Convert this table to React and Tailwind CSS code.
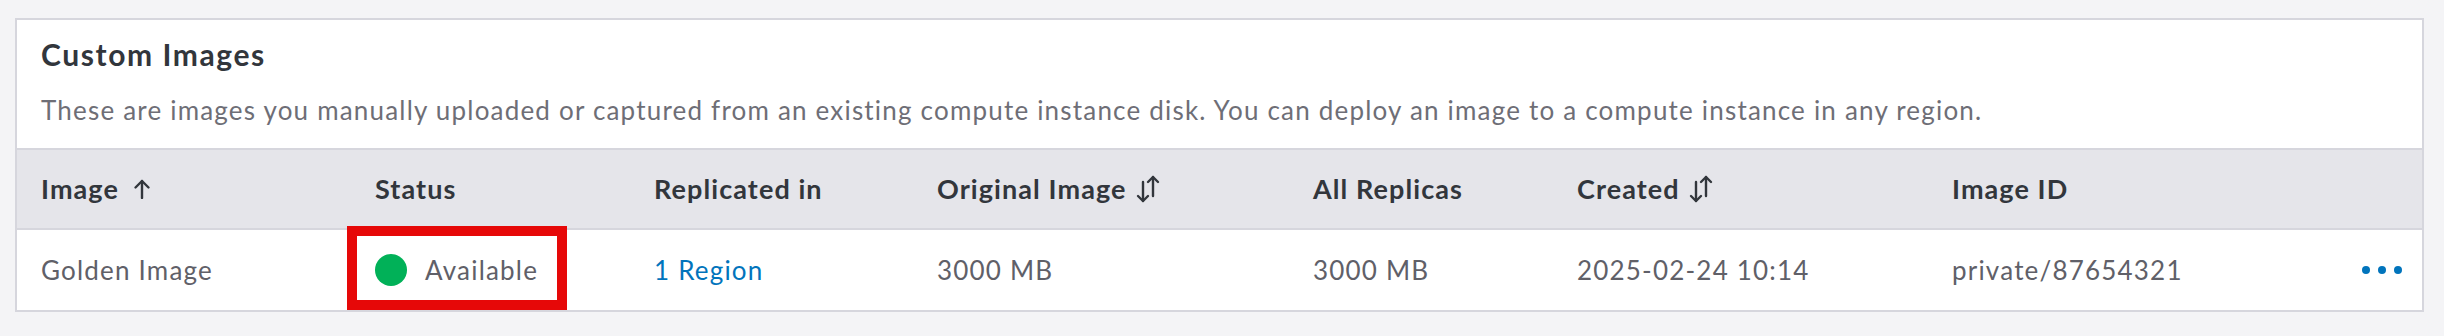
import React from 'react'

// ─── Icons ───────────────────────────────────────────────────────────────────

function ArrowUp() {
  return (
    <svg width="18" height="20" viewBox="0 0 18 20" fill="none" stroke="#32363c" strokeWidth="2.4" strokeLinecap="round" strokeLinejoin="round">
      <path d="M9 19V2" />
      <path d="M2.5 8.5L9 2l6.5 6.5" />
    </svg>
  )
}

function SortBoth() {
  return (
    <svg width="26" height="28" viewBox="0 0 26 28" fill="none" stroke="#32363c" strokeWidth="2.4" strokeLinecap="round" strokeLinejoin="round">
      <path d="M8 7v19" />
      <path d="M3 21l5 5 5-5" />
      <path d="M18 21V2" />
      <path d="M13 7l5-5 5 5" />
    </svg>
  )
}

// ─── Data ────────────────────────────────────────────────────────────────────

const COLUMNS = [
  { label: 'Image', sort: 'up' },
  { label: 'Status' },
  { label: 'Replicated in' },
  { label: 'Original Image', sort: 'both' },
  { label: 'All Replicas' },
  { label: 'Created', sort: 'both' },
  { label: 'Image ID' },
  { label: '' },
]

const GRID = 'grid grid-cols-[334px_279px_283px_376px_264px_375px_1fr_80px]'

// ─── Page ────────────────────────────────────────────────────────────────────

export default function App() {
  return (
    <div className="min-h-[336px] bg-[#f4f4f6] pt-[18px] pl-[15px] pr-[20px] pb-[24px] font-['Lato',sans-serif]">
      <div className="bg-white border-2 border-[#d6d6dd]">

        {/* ── Header ─────────────────────────────────────────────────── */}
        <div className="px-[24px] pt-[16px] pb-[22px]">
          <h2 className="text-[30px] leading-[36px] font-bold text-[#32363c] tracking-[0.053em]">Custom Images</h2>
          <p className="mt-[23px] text-[26px] leading-[31px] text-[#6e6e76] tracking-[0.046em]">
            These are images you manually uploaded or captured from an existing compute instance disk. You can deploy an image to a compute instance in any region.
          </p>
        </div>

        {/* ── Table head ─────────────────────────────────────────────── */}
        <div className={`${GRID} h-[82px] items-center bg-[#e5e5ea] border-y-2 border-[#d6d6dd]`}>
          {COLUMNS.map((c, i) => (
            <div
              key={i}
              className={`pl-[24px] flex items-center text-[27px] font-bold text-[#32363c] tracking-[0.04em] ${c.sort === 'both' ? 'gap-[8px]' : 'gap-[14px]'}`}
            >
              {c.label}
              {c.sort === 'up' && <ArrowUp />}
              {c.sort === 'both' && <SortBoth />}
            </div>
          ))}
        </div>

        {/* ── Row ────────────────────────────────────────────────────── */}
        <div className={`${GRID} h-[80px] items-center text-[26px] text-[#606068] tracking-[0.046em]`}>
          <div className="pl-[24px]">Golden Image</div>
          <div className="pl-[24px] relative self-stretch flex items-center gap-[18px]">
            <span className="w-[32px] h-[32px] rounded-full bg-[#01b158]" />
            Available
            {/* highlight box */}
            <span className="absolute left-[-4px] top-[-4px] w-[220px] h-[84px] border-[10px] border-[#e60808]" />
          </div>
          <div className="pl-[24px] text-[#0174bc]">1 Region</div>
          <div className="pl-[24px]">3000 MB</div>
          <div className="pl-[24px]">3000 MB</div>
          <div className="pl-[24px]">2025-02-24 10:14</div>
          <div className="pl-[24px]">private/87654321</div>
          <div className="flex justify-end gap-[8px] pr-[20px]">
            <span className="w-[8px] h-[8px] rounded-full bg-[#0174bc]" />
            <span className="w-[8px] h-[8px] rounded-full bg-[#0174bc]" />
            <span className="w-[8px] h-[8px] rounded-full bg-[#0174bc]" />
          </div>
        </div>

      </div>
    </div>
  )
}
